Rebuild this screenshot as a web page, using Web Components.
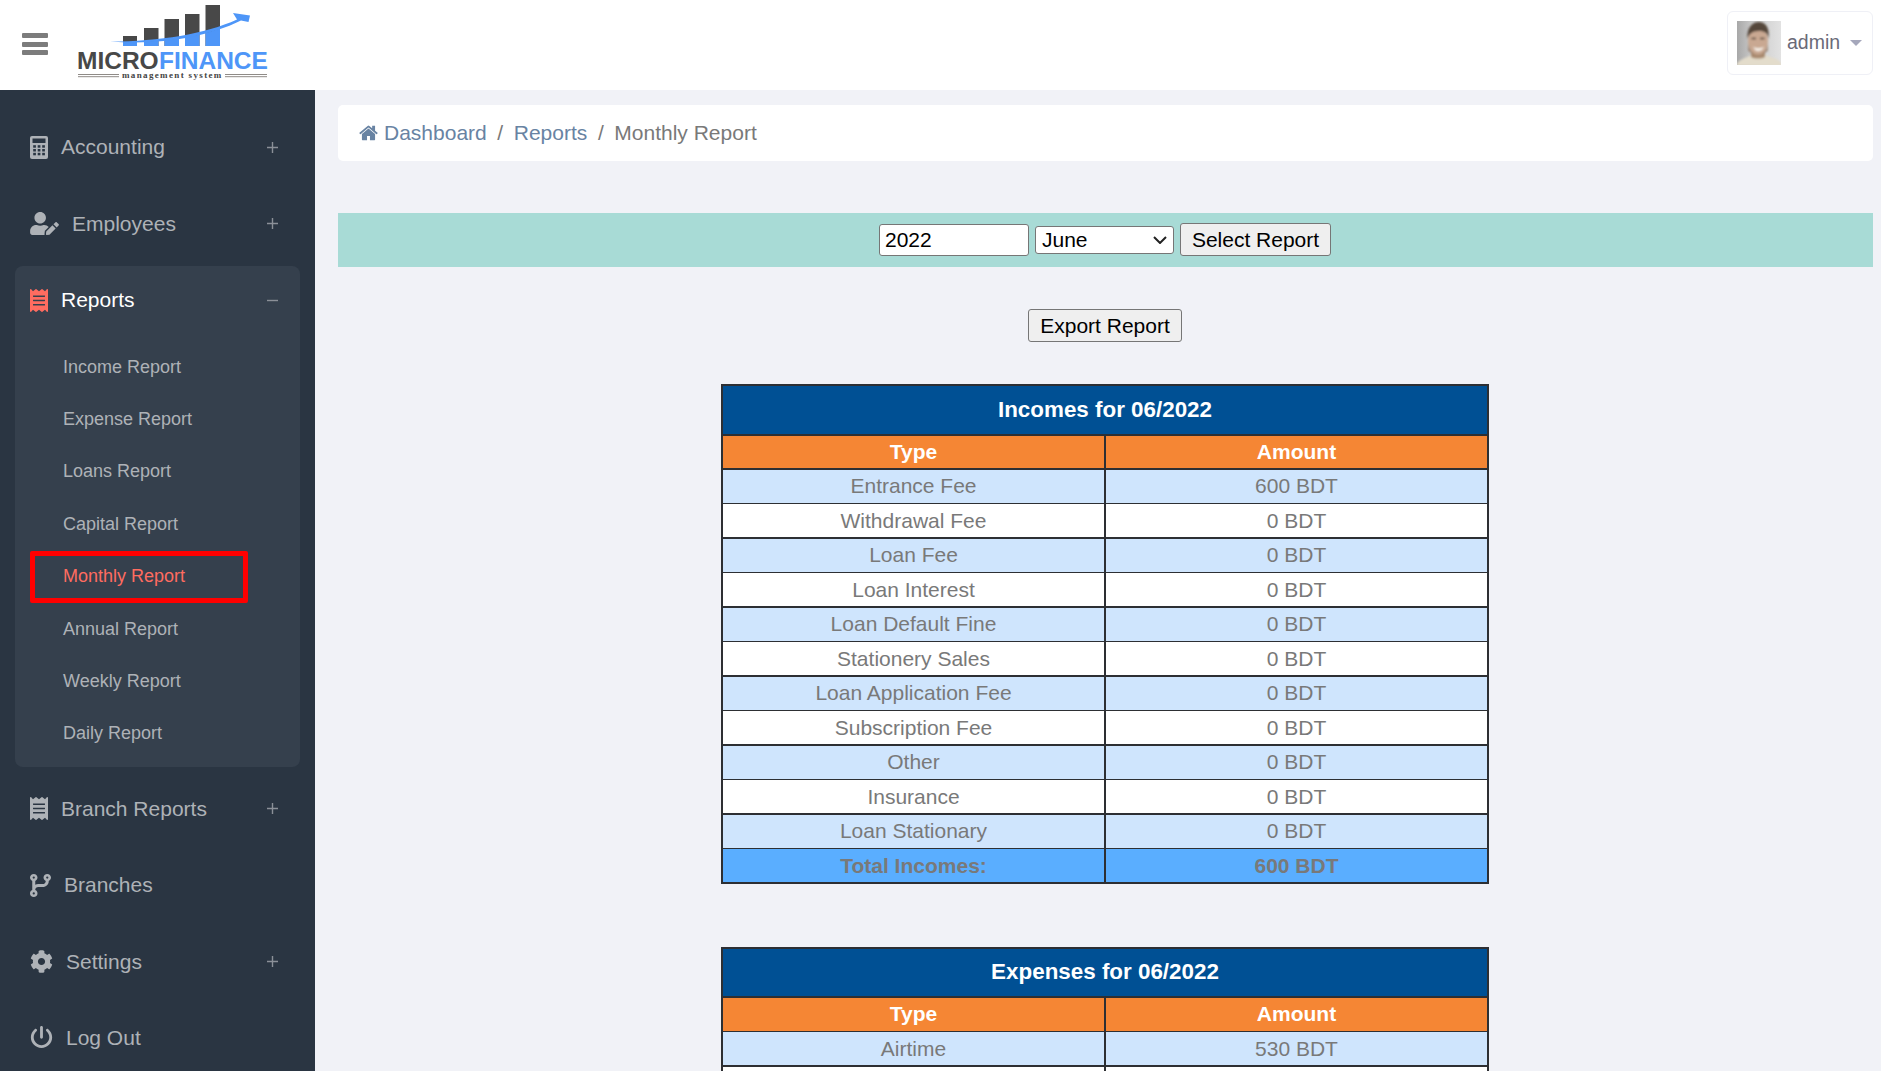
<!DOCTYPE html>
<html lang="en">
<head>
<meta charset="utf-8">
<title>Monthly Report</title>
<style>
html,body{margin:0;padding:0;height:100%;overflow:hidden;background:#f1f2f7;font-family:"Liberation Sans",Arial,sans-serif}
</style>
</head>
<body>
<app-shell>
  <mf-header slot="header"></mf-header>
  <mf-sidebar slot="side">
    <side-item icon="calculator" label="Accounting" toggle="plus"></side-item>
    <side-item icon="useredit" label="Employees" toggle="plus"></side-item>
    <side-group icon="receipt" label="Reports">
      <sub-item>Income Report</sub-item>
      <sub-item>Expense Report</sub-item>
      <sub-item>Loans Report</sub-item>
      <sub-item>Capital Report</sub-item>
      <sub-item active>Monthly Report</sub-item>
      <sub-item>Annual Report</sub-item>
      <sub-item>Weekly Report</sub-item>
      <sub-item>Daily Report</sub-item>
    </side-group>
    <side-item icon="receipt" label="Branch Reports" toggle="plus"></side-item>
    <side-item icon="branch" label="Branches"></side-item>
    <side-item icon="cog" label="Settings" toggle="plus"></side-item>
    <side-item icon="power" label="Log Out"></side-item>
  </mf-sidebar>
  <mf-breadcrumb></mf-breadcrumb>
  <report-form></report-form>
  <export-bar></export-bar>
  <report-table heading="Incomes for 06/2022" total="Total Incomes:|600 BDT" phase="0" title-h="50" head-h="34" head-pad="1"
    rows='[["Entrance Fee","600 BDT"],["Withdrawal Fee","0 BDT"],["Loan Fee","0 BDT"],["Loan Interest","0 BDT"],["Loan Default Fine","0 BDT"],["Stationery Sales","0 BDT"],["Loan Application Fee","0 BDT"],["Subscription Fee","0 BDT"],["Other","0 BDT"],["Insurance","0 BDT"],["Loan Stationary","0 BDT"]]'></report-table>
  <report-table heading="Expenses for 06/2022" phase="1" title-h="49" head-h="35" head-pad="3" style="margin-top:63px"
    rows='[["Airtime","530 BDT"],["\u00a0","\u00a0"]]'></report-table>
</app-shell>
<script>
const calcCells=[3.2,7.7,12.2].flatMap(x=>[9.2,13,16.8].map(y=>`<rect x="${x}" y="${y}" width="2.7" height="2.5"/>`)).join('');
const ICONS={
 calculator:{svg:`<svg viewBox="0 0 18 23" width="18" height="23"><rect width="18" height="23" rx="2" fill="currentColor"/><rect x="2.5" y="2.500" width="13" height="4.500" fill="#2a3542"/><g fill="#2a3542">${calcCells}</g></svg>`},
 useredit:{svg:`<svg viewBox="0 0 640 512" width="29" height="23"><path fill="currentColor" d="M224 256c70.700 0 128-57.300 128-128S294.700 0 224 0 96 57.300 96 128s57.300 128 128 128zm89.600 32h-16.700c-22.200 10.200-46.900 16-72.900 16s-50.600-5.800-72.900-16h-16.700C60.200 288 0 348.200 0 422.400V464c0 26.500 21.500 48 48 48h274.900c-2.400-6.800-3.400-14-2.600-21.300l6.800-60.900 1.200-11.100 7.900-7.900 77.300-77.300c-24.500-27.700-60-45.500-99.900-45.500zm45.300 145.300l-6.800 61c-1.100 10.200 7.500 18.800 17.600 17.600l60.900-6.800 137.900-137.900-71.700-71.700-137.900 137.800zM633 268.900L595.100 231c-9.300-9.300-24.500-9.300-33.800 0l-37.800 37.800-4.100 4.100 71.800 71.700 41.800-41.800c9.300-9.400 9.300-24.500 0-33.900z"/></svg>`},
 receipt:{svg:`<svg viewBox="0 0 384 512" width="18" height="23" preserveAspectRatio="none"><path fill="currentColor" d="M358.400 3.200L320 48 265.600 3.200a15.900 15.900 0 0 0-19.200 0L192 48 137.600 3.200a15.900 15.900 0 0 0-19.200 0L64 48 25.600 3.200C15-4.700 0 2.800 0 16v480c0 13.200 15 20.700 25.600 12.800L64 464l54.400 44.800a15.900 15.900 0 0 0 19.200 0L192 464l54.400 44.800a15.900 15.900 0 0 0 19.200 0L320 464l38.400 44.800c10.500 7.900 25.600.4 25.600-12.800V16c0-13.200-15-20.700-25.600-12.800zM320 360c0 4.400-3.600 8-8 8H72c-4.400 0-8-3.600-8-8v-16c0-4.400 3.600-8 8-8h240c4.400 0 8 3.600 8 8v16zm0-96c0 4.400-3.600 8-8 8H72c-4.400 0-8-3.600-8-8v-16c0-4.400 3.600-8 8-8h240c4.400 0 8 3.600 8 8v16zm0-96c0 4.400-3.600 8-8 8H72c-4.400 0-8-3.600-8-8v-16c0-4.400 3.600-8 8-8h240c4.400 0 8 3.600 8 8v16z"/></svg>`},
 branch:{svg:`<svg viewBox="0 0 448 512" width="21" height="23" preserveAspectRatio="none"><path fill="currentColor" d="M80 104a24 24 0 1 0 0-48 24 24 0 1 0 0 48zm80-24c0 32.800-19.700 61-48 73.300v87.800c18.800-10.900 40.700-17.100 64-17.100h96c35.300 0 64-28.700 64-64v-6.700C307.700 141 288 112.800 288 80c0-44.200 35.800-80 80-80s80 35.800 80 80c0 32.800-19.700 61-48 73.300V160c0 70.700-57.300 128-128 128H176c-35.300 0-64 28.700-64 64v6.700c28.300 12.300 48 40.500 48 73.300c0 44.200-35.800 80-80 80s-80-35.800-80-80c0-32.800 19.700-61 48-73.300V352 153.300C19.700 141 0 112.800 0 80C0 35.800 35.800 0 80 0s80 35.800 80 80zm232 0a24 24 0 1 0 -48 0 24 24 0 1 0 48 0zM80 456a24 24 0 1 0 0-48 24 24 0 1 0 0 48z"/></svg>`},
 cog:{svg:`<svg viewBox="0 0 512 512" width="23" height="23"><path fill="currentColor" d="M487.400 315.700l-42.600-24.600c4.300-23.200 4.300-47 0-70.200l42.600-24.600c4.900-2.800 7.100-8.600 5.500-14-11.100-35.600-30-67.800-54.700-94.600-3.800-4.100-10-5.100-14.800-2.300L380.800 110c-17.900-15.400-38.500-27.300-60.800-35.100V25.800c0-5.600-3.900-10.500-9.400-11.700-36.700-8.200-74.300-7.800-109.200 0-5.500 1.200-9.400 6.100-9.400 11.700V75c-22.200 7.900-42.800 19.800-60.800 35.100L88.700 85.500c-4.900-2.800-11-1.900-14.800 2.300-24.700 26.700-43.600 58.900-54.700 94.600-1.700 5.400.6 11.200 5.500 14L67.300 221c-4.300 23.200-4.300 47 0 70.200l-42.600 24.600c-4.900 2.800-7.100 8.600-5.500 14 11.100 35.600 30 67.800 54.700 94.600 3.800 4.100 10 5.100 14.800 2.300l42.600-24.600c17.900 15.400 38.500 27.300 60.800 35.100v49.200c0 5.600 3.900 10.500 9.400 11.700 36.700 8.200 74.300 7.800 109.200 0 5.500-1.200 9.400-6.100 9.400-11.700v-49.200c22.200-7.900 42.800-19.800 60.800-35.100l42.600 24.600c4.900 2.800 11 1.900 14.800-2.300 24.700-26.700 43.600-58.900 54.700-94.600 1.500-5.500-.7-11.300-5.600-14.100zM256 336c-44.100 0-80-35.900-80-80s35.900-80 80-80 80 35.900 80 80-35.900 80-80 80z"/></svg>`},
 power:{svg:`<svg viewBox="16 0 480 496" width="23" height="22" style="margin-top:-3px"><path fill="currentColor" d="M288 32c0-17.700-14.300-32-32-32s-32 14.300-32 32V256c0 17.700 14.300 32 32 32s32-14.300 32-32V32zM143.500 120.600c13.600-11.300 15.400-31.500 4.100-45.100s-31.500-15.400-45.100-4.100C49.700 115.400 16 181.800 16 256c0 132.500 107.500 240 240 240s240-107.500 240-240c0-74.200-33.800-140.600-86.600-184.600c-13.600-11.300-33.800-9.400-45.100 4.100s-9.400 33.800 4.100 45.100c38.900 32.300 63.500 81 63.500 135.400c0 97.200-78.800 176-176 176s-176-78.800-176-176c0-54.400 24.700-103.100 63.500-135.400z"/></svg>`}
};
const toggleSvg=t=>`<svg class="tog" viewBox="0 0 11 11" width="11" height="11"><path d="M0 5.500H11${t==='plus'?'M5.500 0V11':''}" stroke="#8b9098" stroke-width="1.400" fill="none"/></svg>`;
const define=(name,cls)=>customElements.define(name,cls);

define('app-shell',class extends HTMLElement{
 constructor(){super();this.attachShadow({mode:'open'}).innerHTML=`<style>
 :host{display:grid;grid-template-columns:315px 1fr;grid-template-rows:90px 1fr;height:1071px;overflow:hidden}
 .h{grid-column:1/3}
 main{padding:15px 8px 0 23px;overflow:hidden;min-width:0;background:#f1f2f7}
 </style><div class="h"><slot name="header"></slot></div><slot name="side"></slot><main><slot></slot></main>`}
});

define('mf-header',class extends HTMLElement{
 constructor(){super();this.attachShadow({mode:'open'}).innerHTML=`<style>
 :host{display:flex;align-items:center;height:90px;background:#fff;padding-left:22px;padding-right:8px;box-sizing:border-box}
 .burger{display:flex;flex-direction:column;gap:3.500px;width:26px;margin-top:-2px}
 .burger i{display:block;height:5px;background:#7c7c7c;border-radius:1px}
 .logo{margin-left:28px;display:block;align-self:flex-start}
 .user{margin-left:auto;display:flex;align-items:center;height:64px;box-sizing:border-box;width:146px;border:1px solid #eff0f6;border-radius:6px;padding-left:9px;margin-top:-4px;font:19.500px "Liberation Sans",Arial,sans-serif;color:#6a6a78}
 .user svg.av{display:block;width:44px;height:44px}
 .name{margin-left:6px;margin-top:-1px}
 .caret{margin-left:10px;width:0;height:0;border:6px solid transparent;border-top:6px solid #a5a7bb;border-bottom:0}
 </style>
 <div class="burger"><i></i><i></i><i></i></div>
 <svg class="logo" width="194" height="90" viewBox="76 0 194 90">
  <defs><clipPath id="below"><path d="M100 41.500C160 44 205 38 245 18V50H100Z"/></clipPath></defs>
  <g fill="#484848"><rect x="123" y="36" width="14" height="10"/><rect x="144" y="28" width="14.500" height="18"/><rect x="164.500" y="19" width="14.500" height="27"/><rect x="185" y="14" width="14.500" height="32"/><rect x="205.500" y="5" width="14.500" height="41"/></g>
  <g fill="#4e96f8" clip-path="url(#below)"><rect x="123" y="36" width="14" height="10"/><rect x="144" y="28" width="14.500" height="18"/><rect x="164.500" y="19" width="14.500" height="27"/><rect x="185" y="14" width="14.500" height="32"/><rect x="205.500" y="5" width="14.500" height="41"/></g>
  <path fill="#4e96f8" d="M110 41.500C160 41.500 205 34 237 19.500L233 13L250 15.500L248.500 22L241 20.500C205 38 160 45 110 41.500Z"/>
  <text x="77" y="69" font-family="Liberation Sans" font-weight="700" font-size="24.500" fill="#484848">MICRO</text>
  <text x="159" y="69" font-family="Liberation Sans" font-weight="700" font-size="24.500" fill="#4e96f8">FINANCE</text>
  <g stroke="#8f8b87" stroke-width="1"><path d="M78 74.500H119M78 76.700H119M225 74.500H267M225 76.700H267"/></g>
  <text x="122" y="78" font-family="Liberation Serif" font-weight="700" font-size="9" letter-spacing="1.350" fill="#444">management system</text>
 </svg>
 <div class="user">
  <svg class="av" viewBox="0 0 44 44">
   <defs><linearGradient id="bg" x1="0" x2="1" y1="0" y2="0"><stop offset="0" stop-color="#a8a8a8"/><stop offset=".35" stop-color="#c9c9c9"/><stop offset="1" stop-color="#e2e2e2"/></linearGradient><filter id="b" x="-10%" y="-10%" width="120%" height="120%"><feGaussianBlur stdDeviation=".9"/></filter></defs>
   <rect width="44" height="44" fill="url(#bg)"/>
   <g filter="url(#b)">
    <path d="M-1 45C0 39 8 37 15 34L28 34C34 37 44 37 45 45Z" fill="#e3dccb"/>
    <path d="M14 28H28V36C25 38 17 38 14 36Z" fill="#a98a70"/>
    <ellipse cx="21" cy="20" rx="10" ry="13.500" fill="#c9a892"/>
    <path d="M10.500 18C9.500 7 15 1 22 1C28 1 33 6 31.500 18C30.500 12 28 10 22 10C15 10 12 13 10.500 18Z" fill="#54463a"/>
    <path d="M14.500 17.500h4.500M23 17.500h4.500" stroke="#4c3f35" stroke-width="1.700"/>
    <path d="M16 25.500C19 27.500 24 27.500 27 25.500L25 29C22 30.500 19.500 30.500 18 29Z" fill="#f3ece4"/>
    <path d="M11 22C12 28 14 31 17 33L11.500 30ZM31 22C30 28 28 31 25 33L30.500 30Z" fill="#8f7460"/>
   </g>
  </svg>
  <span class="name">admin</span><span class="caret"></span>
 </div>`}
});

define('mf-sidebar',class extends HTMLElement{
 constructor(){super();this.attachShadow({mode:'open'}).innerHTML=`<style>
 :host{display:block;background:#2a3542;padding-top:19px;overflow:hidden;color:#aeb2b7}
 </style><slot></slot>`}
});

const itemStyle=`
 .row{display:flex;align-items:center;height:76.500px;padding:0 37px 0 30px;box-sizing:border-box;font:21px "Liberation Sans",Arial,sans-serif;color:#aeb2b7}
 .ic{display:flex;margin-right:13px;flex:none}
 .tog{margin-left:auto;display:block}
`;
define('side-item',class extends HTMLElement{
 connectedCallback(){ if(this.shadowRoot)return;
  const ic=ICONS[this.getAttribute('icon')],t=this.getAttribute('toggle');
  this.attachShadow({mode:'open'}).innerHTML=`<style>:host{display:block}${itemStyle}</style><div class="row"><span class="ic">${ic.svg}</span><span>${this.getAttribute('label')}</span>${t?toggleSvg(t):''}</div>`}
});
define('side-group',class extends HTMLElement{
 connectedCallback(){ if(this.shadowRoot)return;
  const ic=ICONS[this.getAttribute('icon')];
  this.attachShadow({mode:'open'}).innerHTML=`<style>
  :host{display:block;margin:4px 15px 3.500px;background:#35404d;border-radius:8px;padding-bottom:7px}
  ${itemStyle}
  .row{height:68px;padding:0 22px 0 15px;color:#fff}
  .ic{color:#ff6c60}
  .list{padding-top:7px;padding-left:15px}
  </style><div class="row"><span class="ic">${ic.svg}</span><span>${this.getAttribute('label')}</span>${toggleSvg('minus')}</div><div class="list"><slot></slot></div>`}
});
define('sub-item',class extends HTMLElement{
 constructor(){super();this.attachShadow({mode:'open'}).innerHTML=`<style>
 :host{display:flex;align-items:center;box-sizing:border-box;width:218px;height:52.400px;padding-left:28px;border:5px solid transparent;border-radius:2px;font:18px "Liberation Sans",Arial,sans-serif;color:#aeb2b7}
 :host([active]){border-color:#ff0000;color:#ff6c60}
 </style><slot></slot>`}
});

define('mf-breadcrumb',class extends HTMLElement{
 constructor(){super();this.attachShadow({mode:'open'}).innerHTML=`<style>
 :host{display:flex;align-items:center;height:56px;background:#fff;border-radius:5px;padding-left:21px;font:21px "Liberation Sans",Arial,sans-serif;color:#797979}
 a{color:#6883a3;display:flex;align-items:center}
 svg{display:block;margin-right:6px}
 .s{margin:0 10.600px;color:#797979}
 </style>
 <a><svg viewBox="0 200 1664 1400" width="19" height="16"><path fill="currentColor" d="M1408 992v480q0 26-19 45t-45 19h-384v-384h-256v384h-384q-26 0-45-19t-19-45v-480q0-1 .5-3t.5-3l575-474 575 474q1 2 1 6zm223-69l-62 74q-8 9-21 11h-3q-13 0-21-7l-692-577-692 577q-12 8-24 7-13-2-21-11l-62-74q-8-10-7-23.500t11-21.500l719-599q32-26 76-26t76 26l244 204v-195q0-14 9-23t23-9h192q14 0 23 9t9 23v408l219 182q10 8 11 21.500t-7 23.500z"/></svg>Dashboard</a><span class="s">/</span><a>Reports</a><span class="s">/</span><span>Monthly Report</span>`}
});

const ctl=`font:21px "Liberation Sans",Arial,sans-serif;color:#000;box-sizing:border-box;border:1px solid #767676;border-radius:3px;margin:0;`;
define('report-form',class extends HTMLElement{
 constructor(){super();this.attachShadow({mode:'open'}).innerHTML=`<style>
 :host{display:flex;align-items:center;justify-content:center;gap:6px;height:54px;margin-top:52px;background:#a8dbd6;padding:0 1px 1px 0;box-sizing:border-box}
 input{${ctl}width:150px;height:32px;padding:0 5px;background:#fff}
 .sel{position:relative;display:block;height:28px}
 select{${ctl}display:block;width:139px;height:28px;padding:0 0 0 6px;background:#fff;appearance:none;-webkit-appearance:none}
 .sel svg{position:absolute;right:7px;top:10px;pointer-events:none}
 button{${ctl}width:151px;height:33px;padding:0;background:#efefef}
 </style><input value="2022"><span class="sel"><select><option>June</option></select><svg width="14" height="8" viewBox="0 0 14 8"><path d="M1 1L7 7L13 1" fill="none" stroke="#222" stroke-width="2"/></svg></span><button>Select Report</button>`}
});
define('export-bar',class extends HTMLElement{
 constructor(){super();this.attachShadow({mode:'open'}).innerHTML=`<style>
 :host{display:flex;justify-content:center;margin-top:42px;padding-right:1px}
 button{${ctl}width:154px;height:33px;padding:0;background:#efefef}
 </style><button>Export Report</button>`}
});

define('report-table',class extends HTMLElement{
 connectedCallback(){ if(this.shadowRoot)return;
  const rows=JSON.parse(this.getAttribute('rows')),total=this.getAttribute('total'),phase=+this.getAttribute('phase');
  const tr=(cls,i,a,b)=>{const thick=(i+phase)%2===0;return `<tr class="${cls}${thick?' thick':''}" style="--t:${thick?2:1}px;height:${thick?35:34}px"><td>${a}</td><td>${b}</td></tr>`};
  let html=rows.map((r,i)=>tr(i%2?'w':'b',i,r[0],r[1])).join('');
  if(total){const t=total.split('|');html+=tr('tot',rows.length,t[0],t[1])}
  this.attachShadow({mode:'open'}).innerHTML=`<style>
  :host{display:block;width:768px;padding-right:1px;margin:42px auto 0;font:21px "Liberation Sans",Arial,sans-serif;color:#797979}
  table{width:768px;table-layout:fixed;border-collapse:separate;border-spacing:0;border-left:2px solid #2d2f33;border-right:2px solid #2d2f33;border-bottom:2px solid #2d2f33;text-align:center}
  col:first-child{width:381px}
  td,th{padding:0;border-top:var(--t,2px) solid #2d2f33;box-sizing:border-box;line-height:1}
  .thick td{padding-bottom:2px}
  td+td,th+th{border-left:2px solid #2d2f33}
  .title th{background:#005094;color:#fff;font-size:22.400px;font-weight:700;height:${this.getAttribute('title-h')}px}
  .head th{background:#f58634;color:#fff;font-weight:700;height:${this.getAttribute('head-h')}px;padding-bottom:${this.getAttribute('head-pad')}px}
  .b td{background:#cfe5fd}.w td{background:#fff}
  .tot td{background:#5aaeff;font-weight:700}
  </style><table><colgroup><col><col></colgroup><tr class="title"><th colspan="2">${this.getAttribute('heading')}</th></tr><tr class="head"><th>Type</th><th>Amount</th></tr>${html}</table>`}
});
</script>
</body>
</html>
